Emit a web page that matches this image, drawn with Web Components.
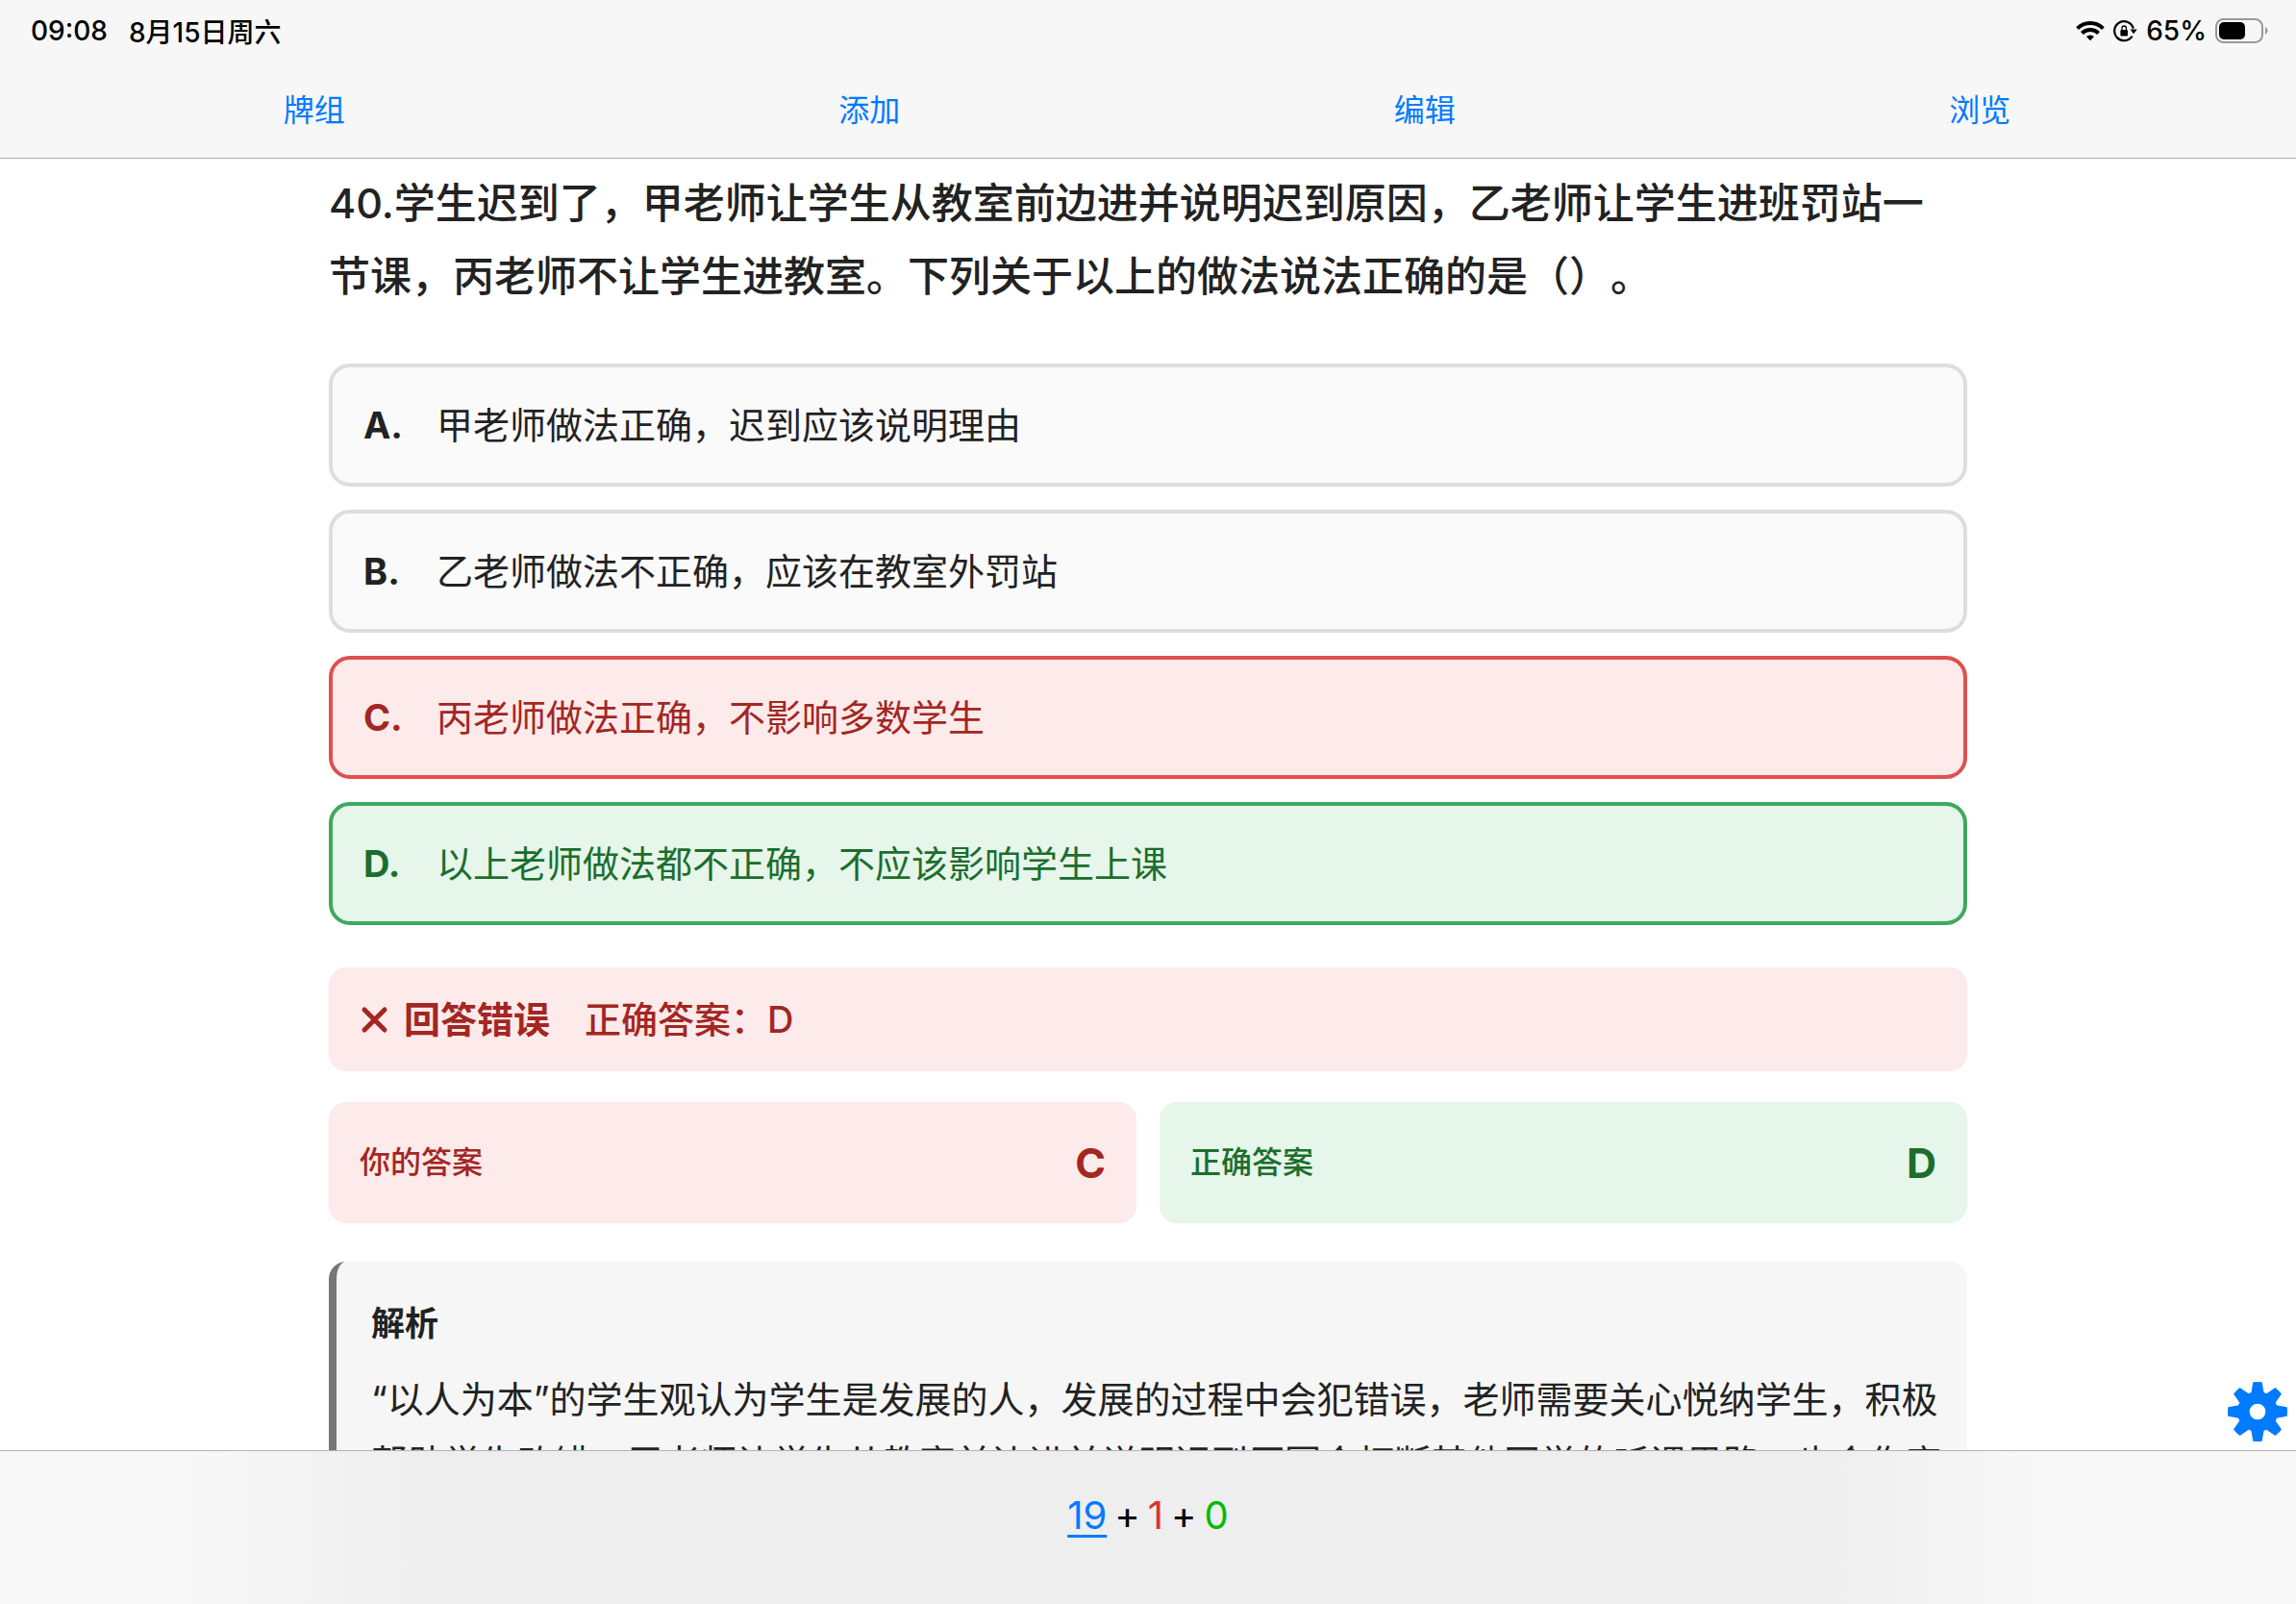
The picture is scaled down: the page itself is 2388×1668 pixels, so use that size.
<!DOCTYPE html>
<html lang="zh-CN">
<head>
<meta charset="utf-8">
<meta name="viewport" content="width=device-width, initial-scale=1">
<title>复习卡片</title>
<style>
    :root {
        --blue: #007aff;
        --text: #222222;
        --bar: #f7f7f7;
        --line: #b2b2b2;
        --neutral-bg: #fafafa;
        --neutral-border: #dddddd;
        --wrong: #a32622;
        --wrong-bg: #fdeaea;
        --wrong-border: #de5050;
        --right: #1b6e2c;
        --right-bg: #e6f6ea;
        --right-border: #3fa85f;
    }

    body {
        margin: 0;
        background: #ffffff;
        color: var(--text);
        font-family: Inter, "Noto Sans CJK SC", sans-serif;
        text-spacing-trim: space-all;
    }
</style>
</head>
<body>
<review-screen>
    <status-bar slot="top" time="09:08" date="8月15日周六" battery="65"></status-bar>
    <deck-toolbar slot="top" items='["牌组", "添加", "编辑", "浏览"]'></deck-toolbar>

    <quiz-card>
        <span slot="question">40.学生迟到了，甲老师让学生从教室前边进并说明迟到原因，乙老师让学生进班罚站一节课，丙老师不让学生进教室。下列关于以上的做法说法正确的是（）。</span>
        <answer-option letter="A">甲老师做法正确，迟到应该说明理由</answer-option>
        <answer-option letter="B">乙老师做法不正确，应该在教室外罚站</answer-option>
        <answer-option letter="C" state="wrong">丙老师做法正确，不影响多数学生</answer-option>
        <answer-option letter="D" state="right">以上老师做法都不正确，不应该影响学生上课</answer-option>
        <result-banner slot="result" answer="D">回答错误</result-banner>
        <answer-tile slot="tiles" state="wrong" letter="C">你的答案</answer-tile>
        <answer-tile slot="tiles" state="right" letter="D">正确答案</answer-tile>
        <answer-analysis slot="analysis" heading="解析">“以人为本”的学生观认为学生是发展的人，发展的过程中会犯错误，老师需要关心悦纳学生，积极帮助学生改错。甲老师让学生从教室前边进并说明迟到原因会打断其他同学的听课思路，也会伤害</answer-analysis>
    </quiz-card>

    <settings-button slot="floating"></settings-button>
    <card-counts slot="bottom" new="19" learning="1" due="0"></card-counts>
</review-screen>

<script>
class ReviewScreen extends HTMLElement {
    constructor() {
        super();
        this.attachShadow({ mode: "open" });
        this.shadowRoot.innerHTML = `
            <style>
                :host {
                    display: flex;
                    flex-direction: column;
                    height: 100vh;
                }

                header {
                    background: var(--bar);
                    border-bottom: 1px solid var(--line);
                }

                .middle {
                    position: relative;
                    display: flex;
                    flex: 1;
                    min-height: 0;
                }

                main {
                    flex: 1;
                    overflow-y: auto;
                    scrollbar-width: none;
                }

                .floating {
                    position: absolute;
                    right: 9px;
                    bottom: 9px;
                }
            </style>
            <header><slot name="top"></slot></header>
            <div class="middle">
                <main><slot></slot></main>
                <div class="floating"><slot name="floating"></slot></div>
            </div>
            <slot name="bottom"></slot>
        `;
    }
}

class StatusBar extends HTMLElement {
    constructor() {
        super();
        this.attachShadow({ mode: "open" });
    }

    connectedCallback() {
        this.shadowRoot.innerHTML = `
            <style>
                :host {
                    display: flex;
                    justify-content: space-between;
                    align-items: center;
                    height: 64px;
                    padding: 0 28px 0 32px;
                    color: #000000;
                    font-size: 28px;
                    font-weight: 500;
                }

                div {
                    display: flex;
                    align-items: center;
                    gap: 9px;
                }

                .clock {
                    gap: 22px;
                }

                svg {
                    display: block;
                }
            </style>
            <div class="clock">
                <span>${this.getAttribute("time")}</span>
                <span>${this.getAttribute("date")}</span>
            </div>
            <div>
                <svg width="30" height="22" viewBox="0 0 30 22" fill="none" stroke="#000" stroke-width="4">
                    <path d="M1.6 8.6a19 19 0 0 1 26.8 0"/>
                    <path d="M6.4 13.5a12.2 12.2 0 0 1 17.2 0"/>
                    <path d="M15 21.2l-4-4.1a5.8 5.8 0 0 1 8 0z" fill="#000" stroke="none"/>
                </svg>
                <svg width="25" height="24" viewBox="0 0 25 24" fill="none" stroke="#000">
                    <path d="M19.6 17.6A10 10 0 1 1 20.8 9.6" stroke-width="2.2"/>
                    <path d="M17.6 10.6h7.2l-3.8 4.6z" fill="#000" stroke="none"/>
                    <rect x="7.4" y="11" width="7.6" height="6.4" rx="1" fill="#000" stroke="none"/>
                    <path d="M9 11.4V9.2a2.2 2.2 0 0 1 4.4 0v2.2" stroke-width="1.3"/>
                </svg>
                <span>${this.getAttribute("battery")}%</span>
                <svg width="56" height="26" viewBox="0 0 56 26">
                    <rect x="1" y="1" width="48" height="24" rx="7.5" fill="none" stroke="#999" stroke-width="2"/>
                    <rect x="4" y="4" width="27" height="18" rx="5" fill="#000"/>
                    <path d="M52 9a4.4 4.4 0 0 1 0 8z" fill="#999"/>
                </svg>
            </div>
        `;
    }
}

class DeckToolbar extends HTMLElement {
    constructor() {
        super();
        this.attachShadow({ mode: "open" });
    }

    connectedCallback() {
        const items = JSON.parse(this.getAttribute("items") || "[]");

        this.shadowRoot.innerHTML = `
            <style>
                :host {
                    display: block;
                }

                nav {
                    display: grid;
                    grid-template-columns: repeat(4, 1fr);
                    padding: 0 40px 4px 38px;
                }

                button {
                    height: 96px;
                    padding: 0;
                    border: 0;
                    background: none;
                    color: var(--blue);
                    font: inherit;
                    font-size: 32px;
                    cursor: pointer;
                }
            </style>
            <nav>
                ${items.map((item) => `<button type="button">${item}</button>`).join("")}
            </nav>
        `;
    }
}

class QuizCard extends HTMLElement {
    constructor() {
        super();
        this.attachShadow({ mode: "open" });
        this.shadowRoot.innerHTML = `
            <style>
                :host {
                    display: block;
                    box-sizing: border-box;
                    max-width: 1704px;
                    margin: 0 auto;
                    padding: 8px 0 40px;
                }

                h1 {
                    margin: 0 0 53px;
                    padding-right: 24px;
                    font-size: 43px;
                    font-weight: 500;
                    line-height: 76px;
                }

                .options {
                    display: grid;
                    gap: 24px;
                    margin-bottom: 44px;
                }

                .tiles {
                    display: grid;
                    grid-template-columns: 1fr 1fr;
                    gap: 24px;
                    margin: 32px 0 40px;
                }
            </style>
            <h1><slot name="question"></slot></h1>
            <div class="options"><slot></slot></div>
            <slot name="result"></slot>
            <div class="tiles"><slot name="tiles"></slot></div>
            <slot name="analysis"></slot>
        `;
    }
}

class AnswerOption extends HTMLElement {
    constructor() {
        super();
        this.attachShadow({ mode: "open" });
    }

    connectedCallback() {
        this.shadowRoot.innerHTML = `
            <style>
                :host {
                    display: block;
                    --fg: var(--text);
                    --bg: var(--neutral-bg);
                    --edge: var(--neutral-border);
                }

                :host([state="wrong"]) {
                    --fg: var(--wrong);
                    --bg: var(--wrong-bg);
                    --edge: var(--wrong-border);
                }

                :host([state="right"]) {
                    --fg: var(--right);
                    --bg: var(--right-bg);
                    --edge: var(--right-border);
                }

                button {
                    display: flex;
                    align-items: center;
                    gap: 20px;
                    width: 100%;
                    padding: 28px 32px;
                    border: 4px solid var(--edge);
                    border-radius: 22px;
                    background: var(--bg);
                    color: var(--fg);
                    font: inherit;
                    font-size: 38px;
                    line-height: 64px;
                    text-align: left;
                }

                b {
                    min-width: 56px;
                    font-weight: 700;
                }
            </style>
            <button type="button"><b>${this.getAttribute("letter")}.</b><span><slot></slot></span></button>
        `;
    }
}

class ResultBanner extends HTMLElement {
    constructor() {
        super();
        this.attachShadow({ mode: "open" });
    }

    connectedCallback() {
        this.shadowRoot.innerHTML = `
            <style>
                :host {
                    display: flex;
                    align-items: center;
                    padding: 22px 32px;
                    border-radius: 18px;
                    background: var(--wrong-bg);
                    color: var(--wrong);
                    font-size: 38px;
                    font-weight: 500;
                    line-height: 64px;
                }

                svg {
                    margin-right: 16px;
                }

                b {
                    margin-right: 36px;
                    font-weight: 700;
                }
            </style>
            <svg width="30" height="30" viewBox="0 0 30 30" fill="none" stroke="currentColor" stroke-width="5" stroke-linecap="round">
                <path d="M5 5l21 21M26 5L5 26"/>
            </svg>
            <b><slot></slot></b>
            <span>正确答案：${this.getAttribute("answer")}</span>
        `;
    }
}

class AnswerTile extends HTMLElement {
    constructor() {
        super();
        this.attachShadow({ mode: "open" });
    }

    connectedCallback() {
        this.shadowRoot.innerHTML = `
            <style>
                :host {
                    display: flex;
                    justify-content: space-between;
                    align-items: center;
                    padding: 31px 32px;
                    border-radius: 18px;
                    background: var(--wrong-bg);
                    color: var(--wrong);
                    font-size: 32px;
                    font-weight: 500;
                    line-height: 64px;
                }

                :host([state="right"]) {
                    background: var(--right-bg);
                    color: var(--right);
                }

                b {
                    font-size: 43px;
                    font-weight: 700;
                }
            </style>
            <span><slot></slot></span>
            <b>${this.getAttribute("letter")}</b>
        `;
    }
}

class AnswerAnalysis extends HTMLElement {
    constructor() {
        super();
        this.attachShadow({ mode: "open" });
    }

    connectedCallback() {
        this.shadowRoot.innerHTML = `
            <style>
                :host {
                    display: block;
                    padding: 32px 24px 32px 36px;
                    border-left: 8px solid #777777;
                    border-radius: 18px;
                    background: #f6f6f6;
                }

                h2 {
                    margin: 0 0 14px;
                    font-size: 35px;
                    font-weight: 700;
                    line-height: 64px;
                }

                p {
                    margin: 0;
                    font-size: 38px;
                    line-height: 66px;
                }
            </style>
            <h2>${this.getAttribute("heading")}</h2>
            <p><slot></slot></p>
        `;
    }
}

class SettingsButton extends HTMLElement {
    constructor() {
        super();
        this.attachShadow({ mode: "open" });
    }

    connectedCallback() {
        // eight identical teeth around a ring
        const teeth = [0, 45, 90, 135, 180, 225, 270, 315]
            .map((angle) => `<path d="M-20-58L-14-92Q0-94 14-92L20-58z" transform="rotate(${angle})"/>`)
            .join("");

        this.shadowRoot.innerHTML = `
            <style>
                :host {
                    display: block;
                }

                button {
                    display: block;
                    padding: 0;
                    border: 0;
                    background: none;
                    color: var(--blue);
                    cursor: pointer;
                }

                svg {
                    display: block;
                }
            </style>
            <button type="button" aria-label="设置">
                <svg width="62" height="62" viewBox="-93 -93 186 186" fill="currentColor">
                    <circle r="44" fill="none" stroke="currentColor" stroke-width="38"/>
                    ${teeth}
                </svg>
            </button>
        `;
    }
}

class CardCounts extends HTMLElement {
    constructor() {
        super();
        this.attachShadow({ mode: "open" });
    }

    connectedCallback() {
        this.shadowRoot.innerHTML = `
            <style>
                :host {
                    display: flex;
                    justify-content: center;
                    gap: 8px;
                    padding: 43px 0 68px;
                    border-top: 1px solid var(--line);
                    background: linear-gradient(90deg, #f8f8f8 8%, #eeeeee 19%, #eeeeee 79%, #f8f8f8 89%);
                    color: #000000;
                    font-size: 40px;
                    line-height: 48px;
                }

                .new {
                    color: var(--blue);
                    text-decoration: underline;
                    text-decoration-thickness: 3px;
                    text-underline-offset: 6px;
                }

                .learning {
                    color: #e03131;
                }

                .due {
                    color: #00bb00;
                }
            </style>
            <span class="new">${this.getAttribute("new")}</span>
            <span>+</span>
            <span class="learning">${this.getAttribute("learning")}</span>
            <span>+</span>
            <span class="due">${this.getAttribute("due")}</span>
        `;
    }
}

customElements.define("review-screen", ReviewScreen);
customElements.define("status-bar", StatusBar);
customElements.define("deck-toolbar", DeckToolbar);
customElements.define("quiz-card", QuizCard);
customElements.define("answer-option", AnswerOption);
customElements.define("result-banner", ResultBanner);
customElements.define("answer-tile", AnswerTile);
customElements.define("answer-analysis", AnswerAnalysis);
customElements.define("settings-button", SettingsButton);
customElements.define("card-counts", CardCounts);
</script>
</body>
</html>
